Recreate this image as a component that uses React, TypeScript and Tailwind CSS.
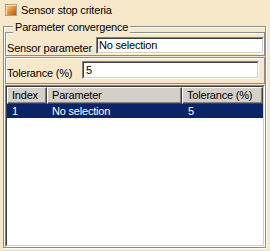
import React from "react";

const sunkenOuter = "border border-t-[#808080] border-l-[#808080] border-b-white border-r-white";
const sunkenInner = "border border-t-[#404040] border-l-[#404040] border-b-[#d4d0c8] border-r-[#d4d0c8]";

function Field({ value, className }: { value: string; className: string }) {
  return (
    <div className={`${sunkenOuter} ${className}`}>
      <div className={`${sunkenInner} h-full bg-white flex items-center pl-[1px]`}>
        <span className="leading-[13px] whitespace-nowrap">{value}</span>
      </div>
    </div>
  );
}

function HeaderCell({ label, w }: { label: string; w: string }) {
  return (
    <div
      className={`${w} h-[17px] bg-[#d4d0c8] border border-t-white border-l-white border-r-[#404040] border-b-[#404040] shadow-[inset_-1px_-1px_0_#808080] pl-[4px] pt-[1px] leading-[13px] whitespace-nowrap overflow-hidden`}
    >
      {label}
    </div>
  );
}

export default function App() {
  return (
    <div className="w-[270px] h-[251px] bg-[#f8e8ca] overflow-hidden text-[11px] tracking-[-0.2px] text-black font-['Liberation_Sans',Arial,sans-serif]">
      <div className="h-[26px] flex items-start pt-[4px] pl-[5px]">
        <div className="w-[12px] h-[12px] border border-[#a8a098] bg-gradient-to-br from-[#fcd49a] via-[#e8902c] to-[#b85810] shadow-[inset_1px_1px_0_#fde2b8]" />
        <span className="ml-[4px] leading-[13px]">Sensor stop criteria</span>
      </div>

      <div className="relative ml-[3px] w-[263px] h-[222px] border border-[#8c8c8c] shadow-[inset_1px_1px_0_#fff,1px_1px_0_#fff] flex flex-col pt-[5px] pl-[1px]">
        <span className="absolute top-[-6px] left-[9px] px-[2px] bg-[#f8e8ca] leading-[13px] whitespace-nowrap">
          Parameter convergence
        </span>

        <div className="w-[260px] h-[24px] border border-[#8c8c8c] shadow-[inset_1px_1px_0_#fff] flex items-start">
          <span className="w-[90px] pl-[1px] pt-[9px] leading-[13px] whitespace-nowrap">Sensor parameter</span>
          <Field value="No selection" className="mt-[4px] w-[168px] h-[17px]" />
        </div>

        <div className="mt-[1px] w-[260px] h-[27px] border border-[#8c8c8c] shadow-[inset_1px_1px_0_#fff] flex items-start">
          <span className="w-[76px] pl-[1px] pt-[9px] leading-[13px] whitespace-nowrap">Tolerance (%)</span>
          <Field value="5" className="mt-[3px] w-[177px] h-[18px] [&_span]:pl-[1px]" />
        </div>

        <div className={`mt-[1px] w-[260px] flex-1 ${sunkenOuter}`}>
          <div className={`${sunkenInner} h-full bg-white flex flex-col`}>
            <div className="flex">
              <HeaderCell label="Index" w="w-[40px]" />
              <HeaderCell label="Parameter" w="w-[135px]" />
              <HeaderCell label="Tolerance (%)" w="w-[81px]" />
            </div>
            <div className="flex h-[14px] bg-[#0a246a] text-white leading-[13px] pt-[1px]">
              <div className="w-[40px] pl-[5px]">1</div>
              <div className="w-[135px] pl-[5px] whitespace-nowrap">No selection</div>
              <div className="w-[81px] pl-[6px]">5</div>
            </div>
          </div>
        </div>
      </div>
    </div>
  );
}
